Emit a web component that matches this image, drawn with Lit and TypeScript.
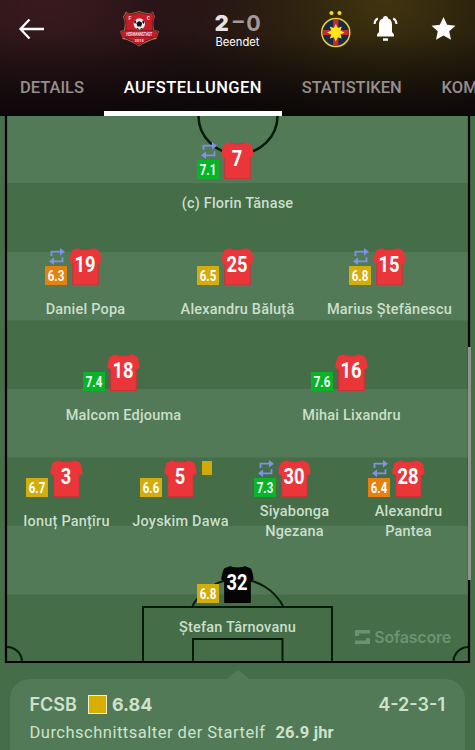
import { LitElement, html, svg, css, nothing } from 'lit';
import { customElement, property } from 'lit/decorators.js';
import { classMap } from 'lit/directives/class-map.js';

interface Player {
  nr: number;
  name: string;
  rating: string;
  subbed?: boolean;
  booked?: boolean;
  keeper?: boolean;
}

const LINES: Player[][] = [
  [{ nr: 7, name: '(c) Florin Tănase', rating: '7.1', subbed: true }],
  [
    { nr: 19, name: 'Daniel Popa', rating: '6.3', subbed: true },
    { nr: 25, name: 'Alexandru Băluță', rating: '6.5' },
    { nr: 15, name: 'Marius Ștefănescu', rating: '6.8', subbed: true },
  ],
  [
    { nr: 18, name: 'Malcom Edjouma', rating: '7.4' },
    { nr: 16, name: 'Mihai Lixandru', rating: '7.6' },
  ],
  [
    { nr: 3, name: 'Ionuț Panțîru', rating: '6.7' },
    { nr: 5, name: 'Joyskim Dawa', rating: '6.6', booked: true },
    { nr: 30, name: 'Siyabonga Ngezana', rating: '7.3', subbed: true },
    { nr: 28, name: 'Alexandru Pantea', rating: '6.4', subbed: true },
  ],
  [{ nr: 32, name: 'Ștefan Târnovanu', rating: '6.8', keeper: true }],
];

@customElement('player-pin')
export class PlayerPin extends LitElement {
  @property({ attribute: false }) player!: Player;

  static styles = css`
    :host {
      display: block;
      min-width: 0;
    }
    .kit {
      display: grid;
      grid-template-columns: 22px 33px 22px;
      justify-content: center;
      column-gap: 2px;
      height: 38px;
    }
    .left {
      display: flex;
      flex-direction: column;
      justify-content: flex-end;
      align-items: center;
      height: 37px;
    }
    svg {
      display: block;
      overflow: visible;
    }
    .swap {
      margin-left: 2px;
      margin-bottom: 1px;
    }
    .rating {
      width: 22px;
      height: 19px;
      background: #d3ad0b;
    }
    .rating.good {
      background: #07b527;
    }
    .rating.low {
      background: #e6810f;
    }
    .card {
      width: 10px;
      height: 14px;
      margin: 1px 0 0 3px;
      background: #d3a907;
    }
    text {
      font-family: Roboto, 'Liberation Sans', sans-serif;
      font-weight: 700;
      fill: #fff;
      text-anchor: middle;
    }
    .name {
      display: flex;
      align-items: center;
      justify-content: center;
      height: 40px;
      margin-top: 4px;
      font: 500 14.5px/20px Roboto, 'Noto Sans', sans-serif;
      letter-spacing: 0.2px;
      color: #cbdfcb;
      text-align: center;
    }
  `;

  render() {
    const { nr, name, rating, subbed, booked, keeper } = this.player;
    const value = Number(rating);
    return html`
      <div class="kit">
        <div class="left">
          ${subbed
            ? html`<svg class="swap" width="18" height="17" viewBox="0 0 18 17">
                <path d="M3.5 8V3.7H13M14.5 9.300V13.300H5" fill="none" stroke="#7f90ee" stroke-width="1.8" />
                <path d="M12 0l5 3.700-5 3.700zM6 9.600L1 13.300l5 3.700z" fill="#7f90ee" />
              </svg>`
            : nothing}
          <svg class=${classMap({ rating: true, good: value >= 7, low: value < 6.5 })} viewBox="0 0 22 19">
            <text x="11" y="15" font-size="14.500" textLength="16.500" lengthAdjust="spacingAndGlyphs">${rating}</text>
          </svg>
        </div>
        <svg width="33" height="38" viewBox="0 0 33 38">
          <path
            d="M9 .3C12 2.200 21 2.200 24 .3L29.500 2.300C31 3 32.500 10.500 32.700 13.500L29.500 15.800V37H3.500V15.800L.3 13.500C.5 10.500 2 3 3.500 2.300z"
            fill=${keeper ? '#050505' : '#ea3539'}
          />
          <path d="M9 .5C12 2.500 21 2.500 24 .5M3.700 15.500V36.500H29.300V15.500" fill="none" stroke=${keeper ? '#000' : '#bf3338'} stroke-width=".8" />
          <text
            x="16"
            y="24.200"
            font-size="22"
            textLength=${nr > 9 ? 21 : 10.5}
            lengthAdjust="spacingAndGlyphs"
          >${nr}</text>
        </svg>
        ${booked ? html`<div class="card"></div>` : nothing}
      </div>
      <div class="name">${name}</div>
    `;
  }
}

@customElement('app-root')
export class AppRoot extends LitElement {
  static styles = css`
    :host {
      display: flex;
      flex-direction: column;
      position: relative;
      width: 475px;
      height: 750px;
      overflow: hidden;
      background: #446d48;
      font-family: Roboto, 'Noto Sans', sans-serif;
    }
    svg {
      display: block;
      overflow: visible;
    }
    header {
      flex: none;
      height: 116px;
      box-sizing: border-box;
      overflow: hidden;
      background:
        linear-gradient(#0000 30%, #080507cc 100%),
        radial-gradient(ellipse 290px 190px at 45px 0, #3a1a1f, #3a1a1f00),
        radial-gradient(ellipse 230px 170px at 385px 0, #41340f, #41340f00),
        #0f0b0b;
    }
    .top {
      display: grid;
      grid-template-columns: 120px 40px 155px 40px 61px 59px;
      height: 60px;
      align-items: start;
    }
    .back {
      margin: 18px 0 0 19px;
    }
    .score {
      display: flex;
      flex-direction: column;
      align-items: center;
      margin-top: 10px;
      color: #fff;
    }
    .goals {
      display: flex;
      gap: 3px;
      height: 26px;
      font: 700 21.5px/26px Inter, sans-serif;
      letter-spacing: -0.5px;
      color: #a29a9a;
    }
    .goals b {
      color: #e8e2e2;
    }
    .goals .dash {
      display: inline-block;
      width: 12px;
      text-align: center;
      font-family: Roboto, sans-serif;
    }
    .state {
      font: 11.2px/13px Inter, sans-serif;
    }
    .tabs {
      display: flex;
      height: 56px;
      font: 500 16.500px/55px Roboto, sans-serif;
      color: #958e8e;
      white-space: nowrap;
    }
    .tab {
      flex: none;
      box-sizing: border-box;
      height: 56px;
      padding: 0 19.900px;
    }
    .tab.active {
      color: #fff;
      letter-spacing: 0.450px;
      border-bottom: 5px solid #fff;
    }
    .pitch {
      flex: none;
      position: relative;
      height: 548px;
    }
    .lines {
      position: absolute;
      inset: 0;
    }
    .lineup {
      position: relative;
      width: 456px;
      margin: 0 auto 0 9.500px;
      padding-top: 25.500px;
    }
    .row {
      display: grid;
      grid-auto-flow: column;
      grid-auto-columns: 1fr;
      height: 106px;
    }
    .brand {
      position: absolute;
      right: 24px;
      bottom: 17px;
      display: flex;
      align-items: center;
      gap: 4px;
      font: 600 16px/20px Inter, sans-serif;
      letter-spacing: -0.200px;
      color: #6e9271;
    }
    .scrollbar {
      position: absolute;
      left: 468px;
      top: 347px;
      width: 3px;
      height: 233px;
      background: #8b998c;
    }
    .summary {
      position: relative;
      flex: none;
      height: 100px;
      margin: 15px 10px 0;
      padding: 14px 20px 0 19.500px;
      box-sizing: border-box;
      border-radius: 20px;
      background: #527a56;
      color: #cfe2cf;
    }
    .caret {
      position: absolute;
      left: 217px;
      top: -9px;
    }
    .team {
      display: flex;
      align-items: center;
      height: 23px;
      font: 600 18px/23px Inter, sans-serif;
    }
    .avg {
      font-weight: 700;
    }
    .swatch {
      width: 17px;
      height: 17px;
      margin: 0 5px 0 11px;
      border: 1px solid #f3eecb;
      background: #d8ae00;
    }
    .formation {
      margin-left: auto;
    }
    .age {
      display: flex;
      gap: 10px;
      margin-top: 7px;
      font: 16.500px/20px Roboto, sans-serif;
      letter-spacing: 0.500px;
    }
    .age b {
      letter-spacing: 0.2px;
    }
  `;

  renderPitch() {
    const stripes = [0, 136, 273, 410];
    return html`<svg class="lines" width="475" height="548" viewBox="0 116 475 548">
      ${stripes.map((y) => svg`<rect x="6" y=${y + 116} width="462" height=${y ? 68.5 : 67} fill="#527a56" />`)}
      <g fill="none" stroke="#071b0a" stroke-width="2">
        <path d="M198.500 116A39.500 38 0 0 0 277.500 116" stroke-width="2.500" />
        <path d="M143 662V607H332V662M193 662V639H282.500V662" />
        <path d="M192.500 606A51.400 51.400 0 0 1 283 606" />
        <path d="M6 647A15 15 0 0 1 22 662M468 647A15 15 0 0 0 453.500 662" />
      </g>
      <path d="M6 116V662H469V116" fill="none" stroke="#000" stroke-width="2.200" />
    </svg>`;
  }

  render() {
    return html`
      <header>
        <div class="top">
          <svg class="back" width="26" height="22" viewBox="0 0 26 22">
            <path d="M10.500 1.500L1.500 11l9 9.500M2 11H25" fill="none" stroke="#fff" stroke-width="2.300" />
          </svg>
          <svg width="40" height="50" viewBox="0 0 40 50">
            <path d="M6 11.500Q10 15 19 11Q29 15 33 11.500L35 17Q32 22 34 30L39 31L36.500 39Q29 40 19 46.500Q10 40 2.500 39L0 31L4 30Q6 22 3 17z" fill="#a77f58" />
            <path d="M7 12.500Q11 16 19 12Q28 16 32.300 12.500L34 17Q31 23 33.300 32V38Q26 40 19 45.500Q12 40 5.300 38V32Q7 23 4.200 17z" fill="#c51c28" stroke="#3d1216" stroke-width=".7" />
            <circle cx="19.300" cy="24" r="5.700" fill="#eee" />
            <path d="M19.300 21l3 2-1.200 3.500h-3.600L16.300 23zM14 22l1.500-2 .8 2-1.300 2zM24.500 22L23 20l-.8 2 1.300 2zM16 28.500l2-.5 1 1.700zM23 28.500l-2-.5-1 1.700z" fill="#111" />
            <path d="M.8 31Q19 29 38 31L36.500 37.500Q19 35.500 2 37.500z" fill="#c51c28" stroke="#5b151a" stroke-width=".5" />
            <g fill="#f2dddd" font-family="Roboto, sans-serif" font-weight="700" text-anchor="middle">
              <text x="19.200" y="35.700" font-size="6" textLength="26" lengthAdjust="spacingAndGlyphs">HERMANNSTADT</text>
              <text x="19.200" y="42" font-size="4">2015</text>
              <text x="9.800" y="19.500" font-size="5">F</text>
              <text x="28.500" y="19.500" font-size="5">C</text>
            </g>
          </svg>
          <div class="score">
            <div class="goals"><b>2</b><span class="dash">–</span><span>0</span></div>
            <div class="state">Beendet</div>
          </div>
          <svg width="40" height="50" viewBox="0 0 40 50">
            <circle cx="16.500" cy="13" r="2.100" fill="#f0dc22" />
            <circle cx="24.500" cy="13" r="2.100" fill="#f0dc22" />
            <circle cx="20.800" cy="32.500" r="14" fill="#182a46" stroke="#ead238" stroke-width="1.500" />
            <path d="M18.200 19.500h5.200v10.400h10.400v5.200H23.400v10.400h-5.200V35.100H7.800V29.900h10.400z" fill="#c42b35" />
            <path d="M20.800 24l2 4 4-1.400-1.400 4 4.200 2-4.200 2 1.400 4-4-1.400-2 4.200-2-4.200-4 1.400 1.400-4-4.200-2 4.200-2-1.400-4 4 1.400z" fill="#ffe51c" />
          </svg>
          <svg width="50" height="50" viewBox="0 0 50 50">
            <path d="M28 18.500a2.500 2.500 0 0 1 5 0C36.500 19.500 37 22.500 37 25v7l2 2.500V36.500H22v-2L24 32v-7c0-2.500.5-5.500 4-6.500z" fill="#fff" />
            <path d="M28 38.300h5v2.500h-5z" fill="#fff" />
            <path d="M22.800 18.500q-3 1.500-3.300 5.500M38.200 18.500q3 1.500 3.300 5.500" fill="none" stroke="#fff" stroke-width="2" />
          </svg>
          <svg width="50" height="50" viewBox="0 0 50 50">
            <path d="M27.500 17l3.600 7.800 8.400.9-6.300 5.600 1.800 8.500-7.500-4.400-7.500 4.400 1.800-8.500-6.300-5.600 8.400-.9z" fill="#fff" />
          </svg>
        </div>
        <nav class="tabs">
          <div class="tab">DETAILS</div>
          <div class="tab active">AUFSTELLUNGEN</div>
          <div class="tab">STATISTIKEN</div>
          <div class="tab">KOMMENTAR</div>
        </nav>
      </header>
      <section class="pitch">
        ${this.renderPitch()}
        <div class="lineup">
          ${LINES.map(
            (line) => html`<div class="row">
              ${line.map((player) => html`<player-pin .player=${player}></player-pin>`)}
            </div>`
          )}
        </div>
        <div class="brand">
          <svg width="15" height="14" viewBox="0 0 15 14">
            <path d="M0 0H15V3.500H4V6H0zM15 14H0V10.500H11V8H15z" fill="currentColor" />
          </svg>
          <span>Sofascore</span>
        </div>
      </section>
      <div class="scrollbar"></div>
      <section class="summary">
        <svg class="caret" width="22" height="9" viewBox="0 0 22 9"><path d="M0 9L9 1Q11-.5 13 1L22 9z" fill="#527a56" /></svg>
        <div class="team">
          <span>FCSB</span>
          <span class="swatch"></span>
          <span class="avg">6.84</span>
          <span class="formation">4-2-3-1</span>
        </div>
        <div class="age"><span>Durchschnittsalter der Startelf</span><b>26.9 jhr</b></div>
      </section>
    `;
  }
}
